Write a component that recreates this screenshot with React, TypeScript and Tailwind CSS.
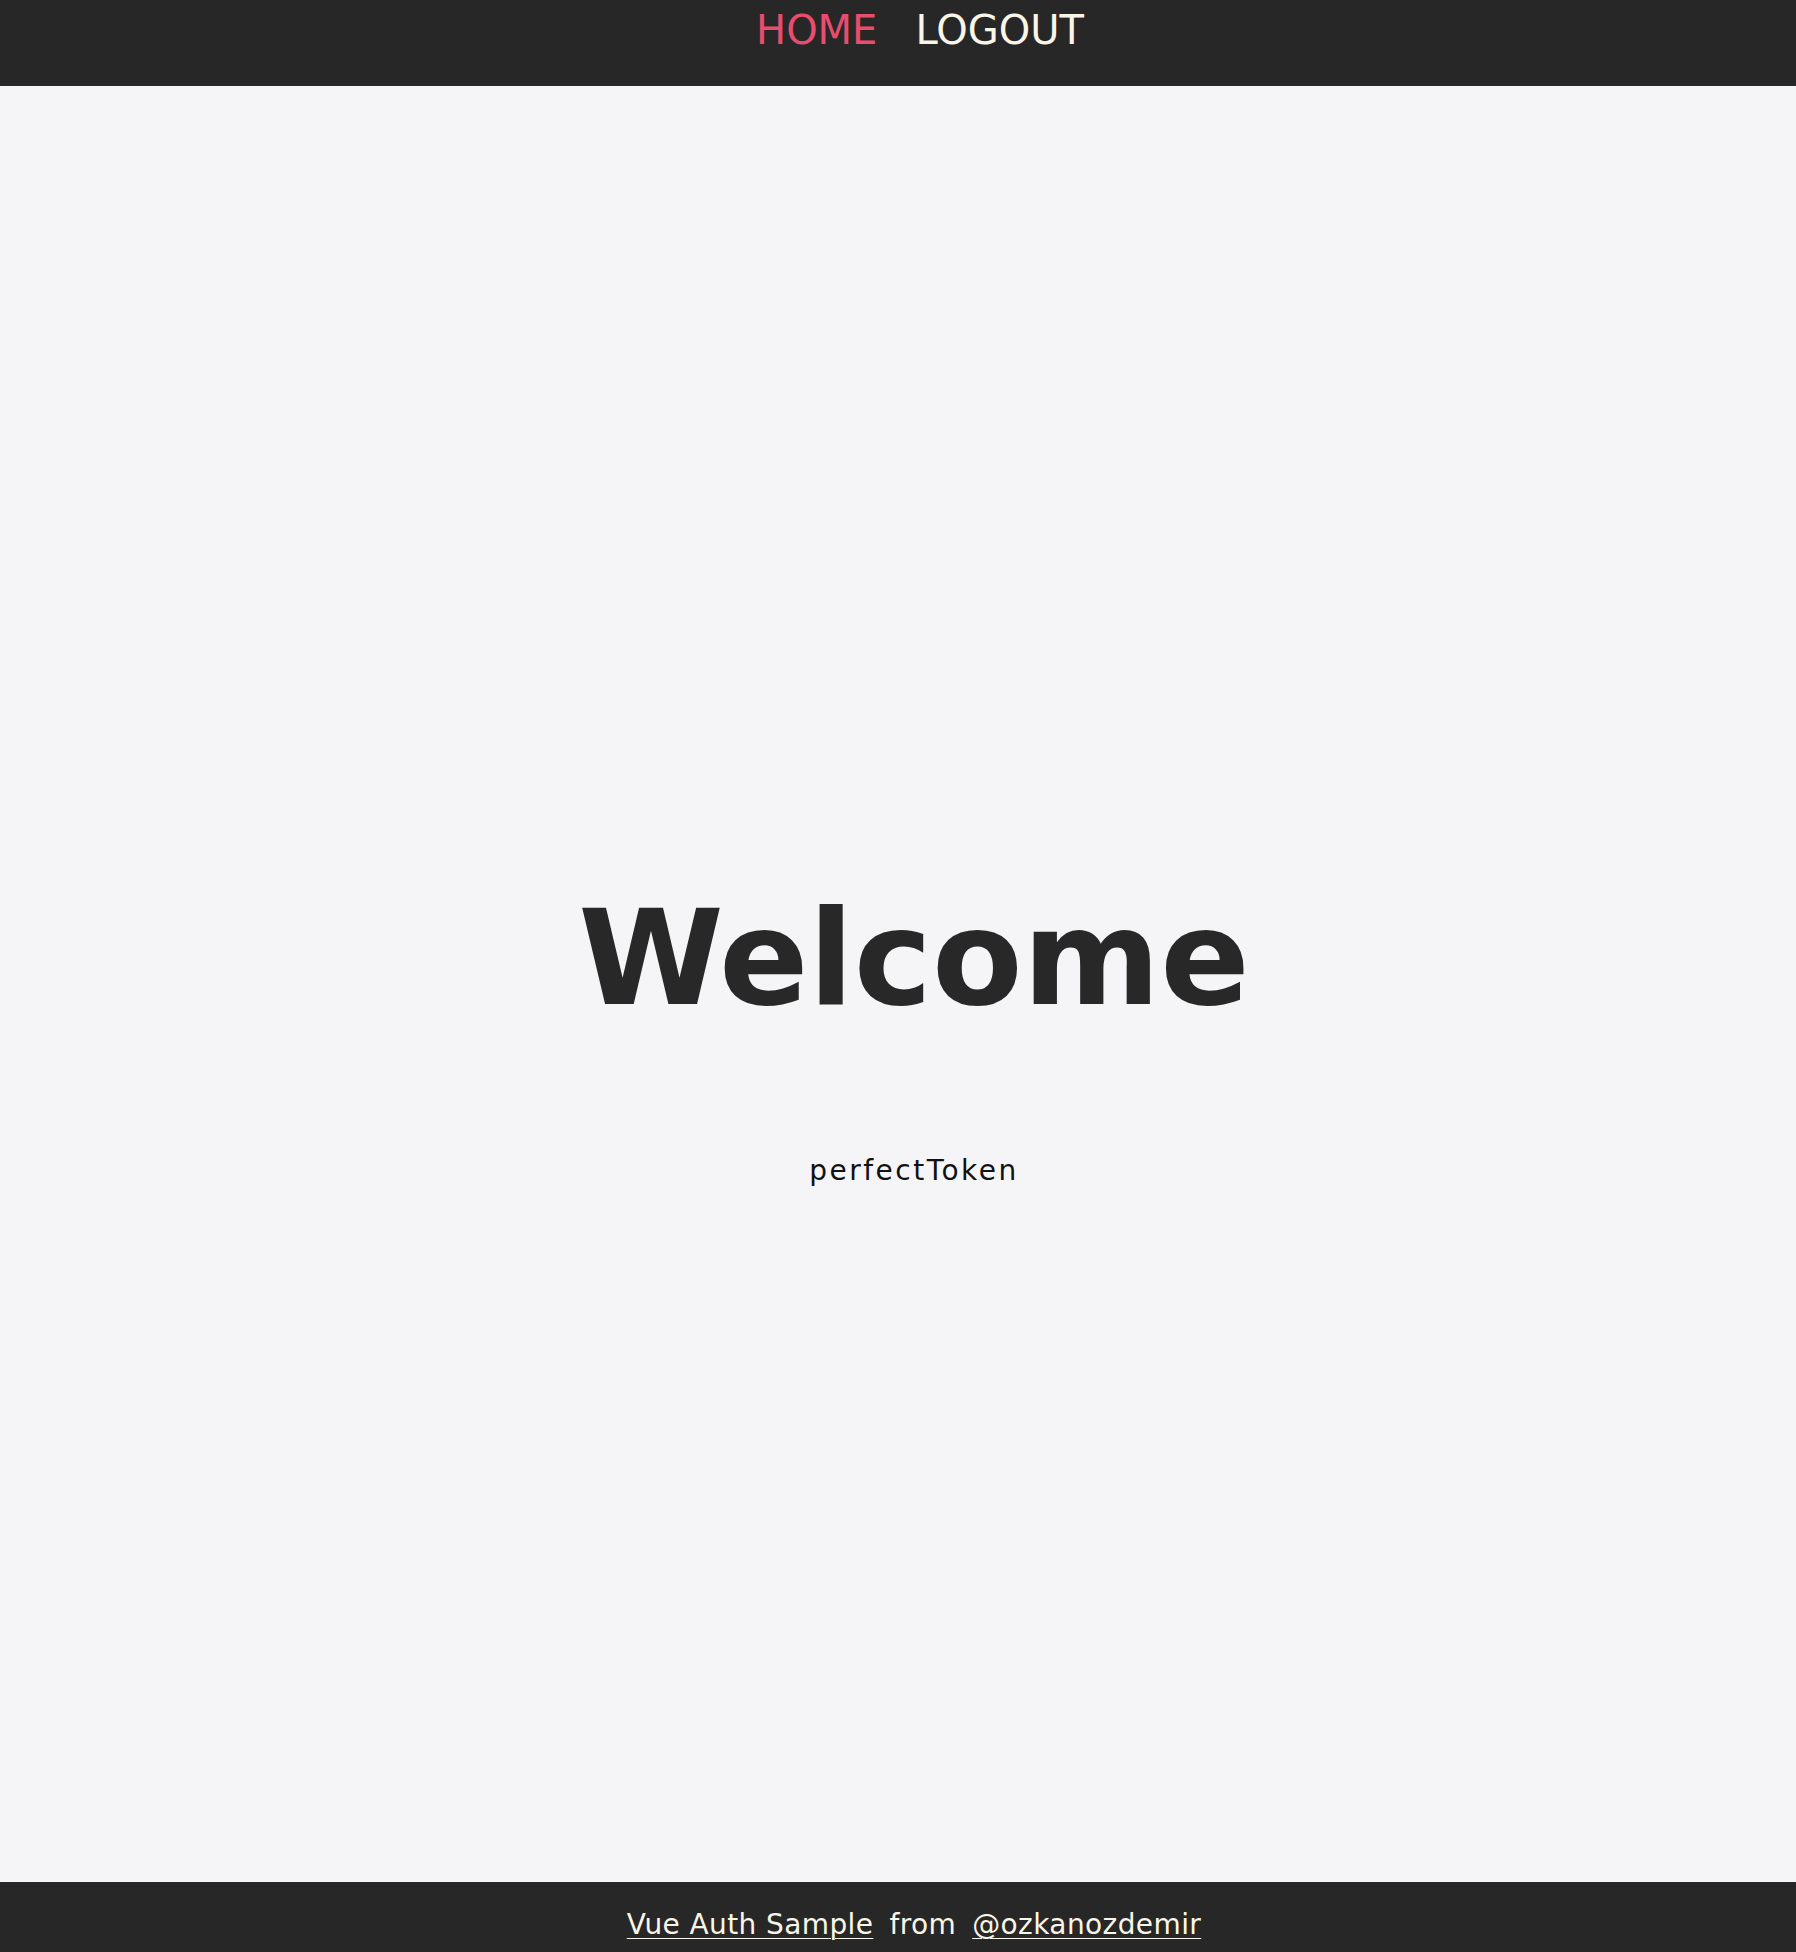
const App = () => {
  return (
    <div className="min-h-[1952px] flex flex-col bg-[#f5f5f7] font-['DejaVu_Sans',sans-serif]">
      {/* Top nav */}
      <header className="h-[86px] bg-[#272727] pl-[44px]">
        <nav className="flex justify-center gap-[38px] pt-[10px] text-[40px] leading-none">
          <a href="#" className="text-[#e94d6e]">HOME</a>
          <a href="#" className="text-[#f9f6e8]">LOGOUT</a>
        </nav>
      </header>

      {/* Content */}
      <main className="flex-1 flex flex-col items-center pl-[32px] pt-[806px]">
        <h1 className="text-[132px] font-bold leading-none text-[#282828]">Welcome</h1>
        <p className="mt-[133px] text-[28px] leading-none tracking-[2.5px] text-[#111111]">perfectToken</p>
      </main>

      {/* Footer */}
      <footer className="h-[70px] bg-[#272727] pl-[32px] pt-[29px]">
        <div className="flex justify-center gap-[16px] text-[28px] leading-none tracking-[0.4px] text-[#f9f6e8]">
          <a href="#" className="underline underline-offset-[4px] decoration-1">Vue Auth Sample</a>
          <span>from</span>
          <a href="#" className="underline underline-offset-[4px] decoration-1">@ozkanozdemir</a>
        </div>
      </footer>
    </div>
  );
};

export default App;
